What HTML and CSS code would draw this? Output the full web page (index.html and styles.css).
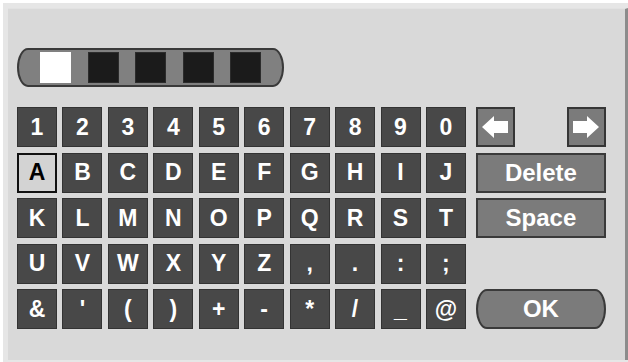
FILE: index.html
```html
<!DOCTYPE html>
<html>
<head>
<meta charset="utf-8">
<link rel="stylesheet" href="styles.css">
</head>
<body>
<div class="frame">
  <div class="panel">
    <div class="pwbar">
      <span class="sq on"></span>
      <span class="sq"></span>
      <span class="sq"></span>
      <span class="sq"></span>
      <span class="sq"></span>
    </div>
    <div class="kb">
      <div class="keys">
        <div class="key">1</div><div class="key">2</div><div class="key">3</div><div class="key">4</div><div class="key">5</div>
        <div class="key">6</div><div class="key">7</div><div class="key">8</div><div class="key">9</div><div class="key">0</div>
        <div class="key sel">A</div><div class="key">B</div><div class="key">C</div><div class="key">D</div><div class="key">E</div>
        <div class="key">F</div><div class="key">G</div><div class="key">H</div><div class="key">I</div><div class="key">J</div>
        <div class="key">K</div><div class="key">L</div><div class="key">M</div><div class="key">N</div><div class="key">O</div>
        <div class="key">P</div><div class="key">Q</div><div class="key">R</div><div class="key">S</div><div class="key">T</div>
        <div class="key">U</div><div class="key">V</div><div class="key">W</div><div class="key">X</div><div class="key">Y</div>
        <div class="key">Z</div><div class="key">,</div><div class="key">.</div><div class="key">:</div><div class="key">;</div>
        <div class="key">&amp;</div><div class="key">'</div><div class="key">(</div><div class="key">)</div><div class="key">+</div>
        <div class="key">-</div><div class="key">*</div><div class="key">/</div><div class="key">_</div><div class="key">@</div>
      </div>
      <div class="side">
        <div class="arrows">
          <div class="akey">
            <svg width="26" height="22" viewBox="0 0 26 22"><polygon points="0,11 12,0 12,5 26,5 26,17 12,17 12,22" fill="#fff"/></svg>
          </div>
          <div class="akey">
            <svg width="26" height="22" viewBox="0 0 26 22"><polygon points="26,11 14,0 14,5 0,5 0,17 14,17 14,22" fill="#fff"/></svg>
          </div>
        </div>
        <div class="wide">Delete</div>
        <div class="wide">Space</div>
        <div class="empty"></div>
        <div class="wide ok">OK</div>
      </div>
    </div>
  </div>
</div>
</body>
</html>
```

FILE: styles.css
```css
html, body {
  margin: 0;
  padding: 0;
  background: #ffffff;
}
body {
  font-family: "Liberation Sans", Arial, sans-serif;
}
.frame {
  margin: 3px 0 0 3px;
  width: 625px;
  height: 359px;
  background: #e6e6e6;
  padding: 5px 0 0 5px;
  box-sizing: border-box;
}
.panel {
  width: 620px;
  height: 352px;
  box-sizing: border-box;
  background: #d9d9d9;
  border-right: 3px solid #8c8c8c;
  border-top: 1px solid #e2e2e2;
  padding: 39px 0 0 9px;
}
.pwbar {
  width: 267px;
  height: 39px;
  box-sizing: border-box;
  background: #808080;
  border: 2px solid #3a3a3a;
  border-radius: 11px / 50%;
  display: flex;
  align-items: center;
  gap: 16.5px;
  padding-left: 21px;
}
.sq {
  width: 31px;
  height: 31px;
  box-sizing: border-box;
  background: #1b1b1b;
  border: 1px solid #2c2c2c;
}
.sq.on {
  background: #ffffff;
  border-color: #ffffff;
}
.kb {
  display: flex;
  gap: 10px;
  margin-top: 20px;
}
.keys {
  display: grid;
  grid-template-columns: repeat(10, 40px);
  grid-auto-rows: 40px;
  column-gap: 5.44px;
  row-gap: 5.5px;
}
.key {
  box-sizing: border-box;
  background: #484848;
  border: 1.5px solid #333333;
  color: #ffffff;
  font-weight: bold;
  font-size: 23px;
  display: flex;
  align-items: center;
  justify-content: center;
}
.key.sel {
  background: #d3d3d3;
  border: 2px solid #111111;
  color: #000000;
}
.side {
  display: grid;
  grid-template-columns: 130px;
  grid-auto-rows: 40px;
  row-gap: 5.5px;
}
.arrows {
  display: flex;
  justify-content: space-between;
}
.akey {
  width: 39px;
  box-sizing: border-box;
  background: #7b7b7b;
  border: 2px solid #363636;
  display: flex;
  align-items: center;
  justify-content: center;
}
.wide {
  box-sizing: border-box;
  background: #7b7b7b;
  border: 2px solid #3a3a3a;
  color: #ffffff;
  font-weight: bold;
  font-size: 24px;
  display: flex;
  align-items: center;
  justify-content: center;
}
.wide.ok {
  border-radius: 11px / 50%;
}
```
